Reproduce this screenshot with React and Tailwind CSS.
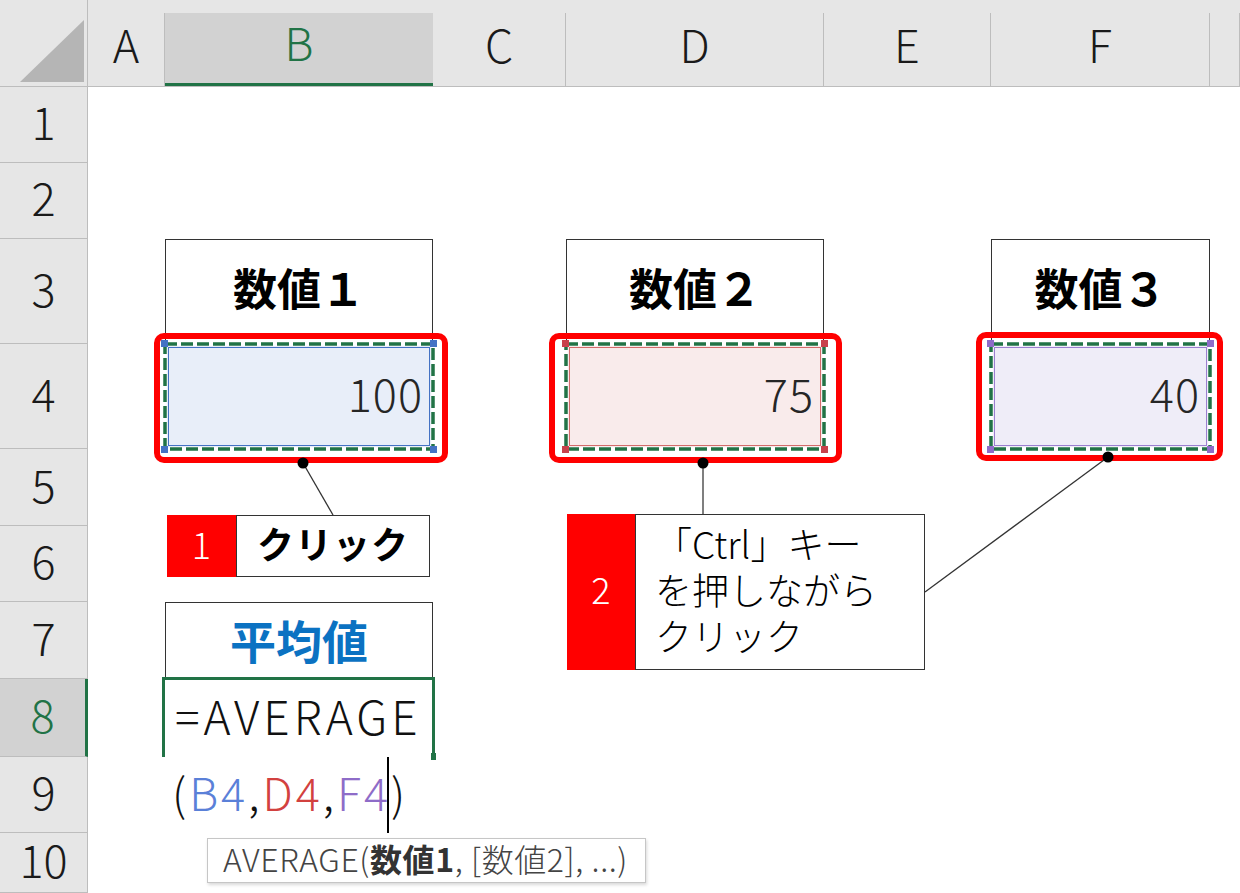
import React from "react";

const FONT = "font-['Noto_Sans_CJK_JP','Noto_Sans',sans-serif]";

function Corner() {
  return (
    <div className="relative bg-[#e6e6e6] border-r border-b border-[#bdbdbd]">
      <svg className="absolute left-[20px] top-[20px]" width="64" height="62" viewBox="0 0 64 62">
        <polygon points="64,0 64,62 0,62" fill="#b5b5b5" />
      </svg>
    </div>
  );
}

function ColHead({ label, selected }) {
  return (
    <div className="flex flex-col bg-[#e6e6e6] border-b border-[#bdbdbd]">
      <div className="h-[13px]" />
      {selected ? (
        <div className="flex flex-1 items-center justify-center bg-[#d2d2d2] border-b-[3px] border-[#217346] text-[#217346] text-[45px] font-light leading-none pb-[13px]">
          {label}
        </div>
      ) : (
        <div className="flex flex-1 items-center justify-center border-r border-[#bdbdbd] text-[#1a1a1a] text-[45px] font-light leading-none pb-[13px]">
          {label}
        </div>
      )}
    </div>
  );
}

function RowHead({ label, selected }) {
  if (selected) {
    return (
      <div className="flex items-center justify-center bg-[#d2d2d2] border-r-[3px] border-[#217346] border-b border-b-[#bdbdbd] text-[#217346] text-[45px] font-light leading-none pb-[8px]">
        {label}
      </div>
    );
  }
  return (
    <div className="flex items-center justify-center bg-[#e6e6e6] border-r border-b border-[#bdbdbd] text-[#1a1a1a] text-[45px] font-light leading-none pb-[8px]">
      {label}
    </div>
  );
}

function HeadBox({ children }) {
  return (
    <div className="flex items-center justify-center border-t border-x border-[#333] text-[44px] font-bold leading-none text-black pb-[10px]">
      {children}
    </div>
  );
}

function ValueCell({ value, tone }) {
  const styles = {
    blue: { bg: "bg-[#e8eef9]", sq: "bg-[#4472c4]", thin: "border-[#4472c4]" },
    red: { bg: "bg-[#f9ebeb]", sq: "bg-[#c8414b]", thin: "border-[#d36b6b]" },
    purple: { bg: "bg-[#efedf8]", sq: "bg-[#8e6cc8]", thin: "border-[#9b7fd0]" },
  }[tone];
  return (
    <div className={`relative flex items-center justify-end pr-[10px] pb-[9px] text-[45px] font-light leading-none text-[#262626] ${styles.bg}`}>
      <div className={`absolute inset-[3px] border ${styles.thin}`} />
      <svg className="absolute inset-0 overflow-visible" width="100%" height="100%">
        <rect x="0" y="0" width="100%" height="100%" fill="none" stroke="#ffffff" strokeWidth="3.5" />
        <rect x="0" y="0" width="100%" height="100%" fill="none" stroke="#217346" strokeWidth="3.5" strokeDasharray="12 4" />
      </svg>
      <div className={`absolute -left-[4px] -top-[4px] w-[7px] h-[7px] ${styles.sq}`} />
      <div className={`absolute -right-[4px] -top-[4px] w-[7px] h-[7px] ${styles.sq}`} />
      <div className={`absolute -left-[4px] -bottom-[4px] w-[7px] h-[7px] ${styles.sq}`} />
      <div className={`absolute -right-[4px] -bottom-[4px] w-[7px] h-[7px] ${styles.sq}`} />
      <span className="relative tracking-[1px]">{value}</span>
    </div>
  );
}

function Empty() {
  return <div className="bg-white" />;
}

export default function App() {
  const cols = ["A", "B", "C", "D", "E", "F", ""];
  const content = {
    "3-1": <HeadBox>数値１</HeadBox>,
    "3-3": <HeadBox>数値２</HeadBox>,
    "3-5": <HeadBox>数値３</HeadBox>,
    "4-1": <ValueCell value="100" tone="blue" />,
    "4-3": <ValueCell value="75" tone="red" />,
    "4-5": <ValueCell value="40" tone="purple" />,
    "7-1": (
      <div className="flex items-center justify-center border border-[#333] text-[46px] font-bold leading-none text-[#0b72c2] pb-[4px]">
        平均値
      </div>
    ),
    "8-1": (
      <div className="relative flex items-center whitespace-nowrap pl-[10px] pb-[6px] text-[46px] font-light leading-none text-[#111] tracking-[4px]">
        <div className="absolute -left-[3px] -top-[2px] -right-[2px] bottom-0 border-x-[3px] border-t-[3px] border-[#217346]" />
        <div className="absolute -right-[3px] -bottom-[3px] w-[5px] h-[7px] bg-[#217346]" />
        <span className="relative">=AVERAGE</span>
      </div>
    ),
    "9-1": (
      <div className="relative flex items-center whitespace-nowrap pl-[7px] pb-[8px] text-[45px] font-light leading-none tracking-[3px]">
        <span className="text-[#111]">(</span>
        <span className="text-[#5a80d8]">B4</span>
        <span className="text-[#111]">,</span>
        <span className="text-[#d2413f]">D4</span>
        <span className="text-[#111]">,</span>
        <span className="text-[#8e6cc8]">F4</span>
        <span className="text-[#111]">)</span>
      </div>
    ),
  };

  const cells = [];
  cells.push(<Corner key="corner" />);
  cols.forEach((c, i) => cells.push(<ColHead key={"h" + i} label={c} selected={c === "B"} />));
  for (let r = 1; r <= 10; r++) {
    cells.push(<RowHead key={"r" + r} label={String(r)} selected={r === 8} />);
    for (let c = 0; c < 7; c++) {
      const k = `${r}-${c}`;
      cells.push(<React.Fragment key={k}>{content[k] || <Empty />}</React.Fragment>);
    }
  }

  return (
    <div className={`relative w-[1240px] h-[893px] overflow-hidden bg-white ${FONT}`}>
      <div className="grid grid-cols-[88px_77px_268px_133px_258px_167px_219px_30px] grid-rows-[87px_76px_76px_105px_105px_77px_76px_77px_78px_76px_60px]">
        {cells}
      </div>

      {/* red highlight frames */}
      <div className="absolute left-[154px] top-[333px] w-[294px] h-[130px] border-[6px] border-[#ff0000] rounded-[10px]" />
      <div className="absolute left-[549px] top-[333px] w-[293px] h-[130px] border-[6px] border-[#ff0000] rounded-[10px]" />
      <div className="absolute left-[976px] top-[332px] w-[247px] h-[129px] border-[6px] border-[#ff0000] rounded-[10px]" />

      {/* connectors */}
      <svg className="absolute left-0 top-0 pointer-events-none" width="1240" height="893">
        <line x1="303" y1="463" x2="333" y2="515" stroke="#333" strokeWidth="1.3" />
        <circle cx="303" cy="463" r="5.5" fill="#000" />
        <line x1="703" y1="463" x2="703" y2="514" stroke="#555" strokeWidth="1.5" />
        <circle cx="703" cy="463" r="5.5" fill="#000" />
        <line x1="1108" y1="457" x2="925" y2="592" stroke="#333" strokeWidth="1.3" />
        <circle cx="1108" cy="457" r="5.5" fill="#000" />
      </svg>

      {/* callout 1 */}
      <div className="absolute left-[167px] top-[515px] flex h-[62px]">
        <div className="flex w-[69px] items-center justify-center bg-[#ff0000] pb-[6px] text-[36px] font-light leading-none text-white">1</div>
        <div className="flex w-[194px] items-center justify-center border-[1.5px] border-[#333] bg-white pb-[5px] text-[37px] font-bold leading-none text-black tracking-[1px]">
          クリック
        </div>
      </div>

      {/* callout 2 */}
      <div className="absolute left-[567px] top-[514px] flex h-[156px]">
        <div className="flex w-[68px] items-center justify-center bg-[#ff0000] pb-[8px] text-[36px] font-light leading-none text-white">2</div>
        <div className="flex w-[290px] items-center border-[1.5px] border-[#333] bg-white pl-[19px] pb-[6px] text-[37px] font-light leading-[46px] text-black">
          <p>
            「Ctrl」キー
            <br />
            を押しながら
            <br />
            クリック
          </p>
        </div>
      </div>

      {/* text cursor */}
      <div className="absolute left-[387px] top-[757px] w-[2px] h-[76px] bg-black" />

      {/* function tooltip */}
      <div className="absolute left-[207px] top-[838px] flex h-[45px] w-[439px] items-center border border-[#c6c6c6] bg-white pl-[15px] pb-[5px] text-[32px] font-light leading-none text-[#444] tracking-[0.6px] shadow-[1px_2px_3px_rgba(0,0,0,0.15)] whitespace-nowrap">
        AVERAGE(<b className="font-bold text-[#333]">数値1</b>, [数値2], ...)
      </div>
    </div>
  );
}
